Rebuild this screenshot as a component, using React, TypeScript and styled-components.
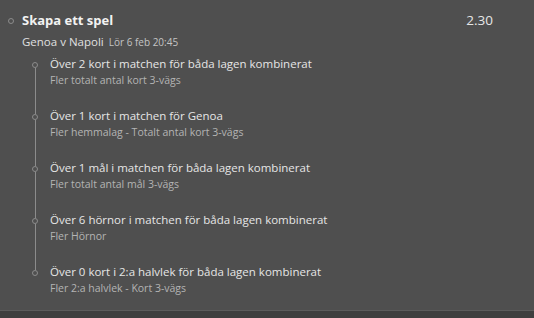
import React from "react";
import styled, { createGlobalStyle } from "styled-components";

const GlobalStyle = createGlobalStyle`
  html, body {
    margin: 0;
    padding: 0;
    background: #3f3f3f;
  }
  body {
    font-family: "Open Sans", "Noto Sans", sans-serif;
  }
`;

interface TLeg {
  title: string;
  market: string;
}

const legs: TLeg[] = [
  { title: "Över 2 kort i matchen för båda lagen kombinerat", market: "Fler totalt antal kort 3-vägs" },
  { title: "Över 1 kort i matchen för Genoa", market: "Fler hemmalag - Totalt antal kort 3-vägs" },
  { title: "Över 1 mål i matchen för båda lagen kombinerat", market: "Fler totalt antal mål 3-vägs" },
  { title: "Över 6 hörnor i matchen för båda lagen kombinerat", market: "Fler Hörnor" },
  { title: "Över 0 kort i 2:a halvlek för båda lagen kombinerat", market: "Fler 2:a halvlek - Kort 3-vägs" },
];

const App = () => {
  return (
    <>
      <GlobalStyle />
      <Panel>
        <Header>
          <Dot />
          <Title>Skapa ett spel</Title>
          <Odds>2.30</Odds>
        </Header>
        <MatchInfo>
          <Teams>Genoa v Napoli</Teams>
          <Kickoff>Lör 6 feb 20:45</Kickoff>
        </MatchInfo>
        <LegList>
          {legs.map((leg, i) => (
            <Leg key={i} $last={i === legs.length - 1}>
              <LegTitle>{leg.title}</LegTitle>
              <LegMarket>{leg.market}</LegMarket>
            </Leg>
          ))}
        </LegList>
      </Panel>
    </>
  );
};

const Panel = styled.div`
  background: #4f4f4f;
  height: 311px;
  box-sizing: border-box;
  border-bottom: 1px solid #5c5c5c;
  padding: 11px 41px 0 8px;
  display: flex;
  flex-direction: column;
`;

const Header = styled.div`
  display: flex;
  align-items: center;
  height: 18px;
`;

const Dot = styled.span`
  width: 4px;
  height: 4px;
  border: 1px solid #8c8c8c;
  border-radius: 50%;
  margin-right: 8px;
  margin-top: 1px;
`;

const Title = styled.h1`
  margin: 0;
  flex: 1;
  color: #f2f2f2;
  font-size: 13px;
  font-weight: bold;
`;

const Odds = styled.span`
  color: #e6e6e6;
  font-size: 13.5px;
`;

const MatchInfo = styled.div`
  display: flex;
  align-items: baseline;
  gap: 5px;
  margin: 5px 0 0 14px;
  height: 16px;
`;

const Teams = styled.span`
  color: #e0e0e0;
  font-size: 11.5px;
`;

const Kickoff = styled.span`
  color: #c4c4c4;
  font-size: 10px;
`;

const LegList = styled.div`
  display: flex;
  flex-direction: column;
  margin: 0 0 0 27px;
  position: relative;
  padding-top: 7px;
`;

const Leg = styled.div<{ $last: boolean }>`
  position: relative;
  padding-left: 15px;
  height: 52px;
  &::before {
    content: "";
    position: absolute;
    left: -3px;
    top: 6px;
    width: 4px;
    height: 4px;
    border: 1px solid #8c8c8c;
    border-radius: 50%;
    background: #4f4f4f;
    z-index: 1;
  }
  &::after {
    content: "";
    position: absolute;
    left: 0;
    top: 12px;
    width: 1px;
    height: 46px;
    background: #8c8c8c;
    display: ${(p) => (p.$last ? "none" : "block")};
  }
`;

const LegTitle = styled.div`
  color: #e6e6e6;
  font-size: 11.5px;
  line-height: 16px;
`;

const LegMarket = styled.div`
  color: #b4b4b4;
  font-size: 10.5px;
  line-height: 16px;
`;

export default App;
